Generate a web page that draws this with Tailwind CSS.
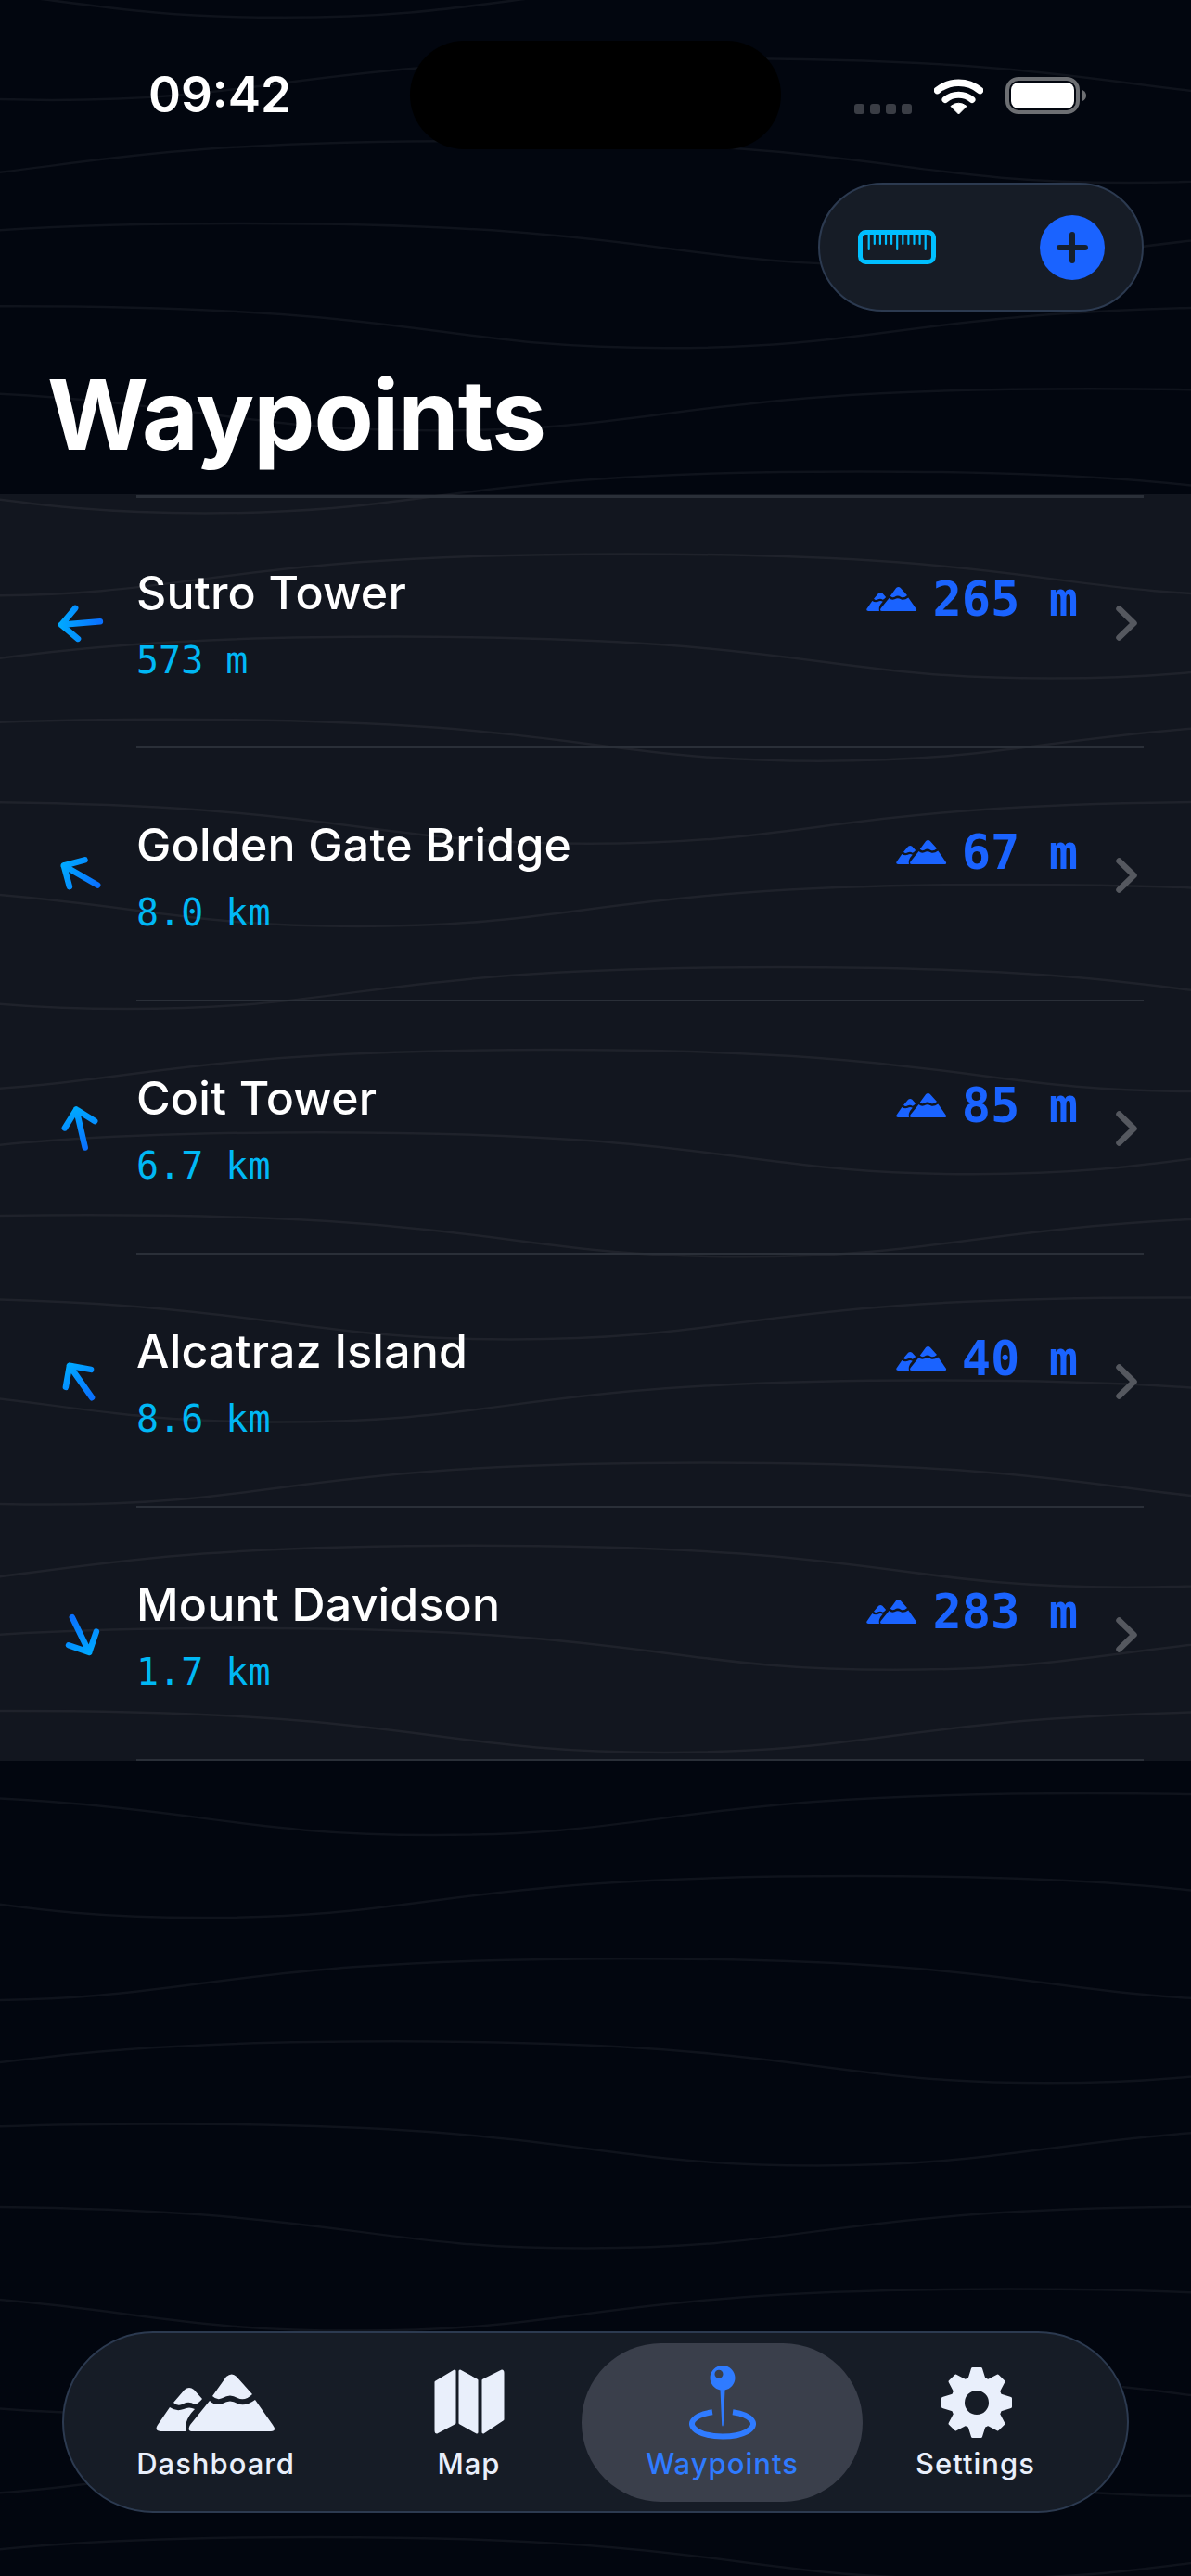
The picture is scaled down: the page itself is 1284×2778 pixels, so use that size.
<!DOCTYPE html>
<html lang="en">
<head>
<meta charset="utf-8">
<script src="https://cdn.jsdelivr.net/npm/@tailwindcss/browser@4"></script>
<title>Waypoints</title>
</head>
<body class="bg-[#02060f]">
<svg class="absolute w-0 h-0" aria-hidden="true">
  <defs>
    <path id="wave" d="M0 22.5C257 22.5 448 -22.5 705 -22.5S1153 22.5 1410 22.5S1667 -22.5 2115 -22.5 S2563 22.5 2820 22.5S3077 -22.5 3525 -22.5S3973 22.5 4230 22.5S4487 -22.5 4935 -22.5S5383 22.5 5640 22.5" fill="none" stroke="#0f131c" stroke-width="2.5"/>
    <linearGradient id="arrowGrad" gradientUnits="userSpaceOnUse" x1="0" y1="-22" x2="0" y2="22">
      <stop offset="0" stop-color="#00a8ff"/><stop offset="1" stop-color="#0a70ff"/>
    </linearGradient>
    <symbol id="arrow" viewBox="-25 -25 50 50">
      <path d="M0 21V-21M-16.6 -4.4L0 -21L16.6 -4.4" fill="none" stroke="url(#arrowGrad)" stroke-width="6.5" stroke-linecap="round" stroke-linejoin="round"/>
    </symbol>
    <symbol id="mountains" viewBox="0 0 130 65">
      <g fill="currentColor">
        <path d="M58 30Q64 36 72 33Q80 28 88 33Q96 37 107 29L126 56Q131 63 124 63L40 63Q33 63 37 56Z"/>
        <path d="M61 25L76 4Q82 -1 87 4L104 23Q96 31 88 27Q80 22 72 27Q66 30 61 25Z"/>
        <path d="M15 37Q22 42 30 39Q36 36 42 39Q35 46 33 53Q32 58 33 63L5 63Q-2 62 2 56Z"/>
        <path d="M19 32L31 18Q36 14 41 18L50 28Q46 33 42 34Q36 30 30 33Q24 37 19 32Z"/>
      </g>
    </symbol>
    <symbol id="chev" viewBox="0 0 23 38">
      <path d="M3.5 3.5L19.5 19L3.5 34.5" fill="none" stroke="#55585f" stroke-width="6.5" stroke-linecap="round" stroke-linejoin="round"/>
    </symbol>
  </defs>
</svg>

<div class="relative w-[1284px] h-[2778px] overflow-hidden bg-[#02060f] text-white [font-family:Inter,sans-serif]">
  <!-- contour lines -->
  <svg class="absolute inset-0" width="1284" height="2778" viewBox="0 0 1284 2778" aria-hidden="true">
    <use href="#wave" x="-2515" y="-3.7"/><use href="#wave" x="-2764" y="85.4"/><use href="#wave" x="-1603" y="174.5"/><use href="#wave" x="-1852" y="263.6"/>
    <use href="#wave" x="-2101" y="352.7"/><use href="#wave" x="-2350" y="441.8"/><use href="#wave" x="-2599" y="530.9"/><use href="#wave" x="-1438" y="620"/>
    <use href="#wave" x="-1687" y="709.1"/><use href="#wave" x="-1936" y="798.2"/><use href="#wave" x="-2185" y="887.3"/><use href="#wave" x="-2434" y="976.4"/>
    <use href="#wave" x="-2683" y="1065.5"/><use href="#wave" x="-1522" y="1154.6"/><use href="#wave" x="-1771" y="1243.7"/><use href="#wave" x="-2020" y="1332.8"/>
    <use href="#wave" x="-2269" y="1421.9"/><use href="#wave" x="-2518" y="1511"/><use href="#wave" x="-2767" y="1600.1"/><use href="#wave" x="-1606" y="1689.2"/>
    <use href="#wave" x="-1855" y="1778.3"/><use href="#wave" x="-2104" y="1867.4"/><use href="#wave" x="-2353" y="1956.5"/><use href="#wave" x="-2602" y="2045.6"/>
    <use href="#wave" x="-1441" y="2134.7"/><use href="#wave" x="-1690" y="2223.8"/><use href="#wave" x="-1939" y="2312.9"/><use href="#wave" x="-2188" y="2402"/>
    <use href="#wave" x="-2437" y="2491.1"/><use href="#wave" x="-2686" y="2580.2"/><use href="#wave" x="-1525" y="2669.3"/><use href="#wave" x="-1774" y="2758.4"/>
  </svg>

  <div class="relative flex flex-col h-full">
    <!-- status bar -->
    <div class="mt-[44px] h-[117px] grid grid-cols-[442px_400px_442px] shrink-0">
      <div class="flex items-start pl-[160px] pt-[30px]">
        <span class="text-[53px] leading-[56px] font-semibold">09:42</span>
      </div>
      <div class="bg-black rounded-full"></div>
      <div class="flex items-start pl-[79px] pt-[39px]">
        <div class="flex gap-[6px] mt-[29px]">
          <span class="w-[11px] h-[11px] rounded-[3px] bg-[#3a3d45]"></span>
          <span class="w-[11px] h-[11px] rounded-[3px] bg-[#3a3d45]"></span>
          <span class="w-[11px] h-[11px] rounded-[3px] bg-[#3a3d45]"></span>
          <span class="w-[11px] h-[11px] rounded-[3px] bg-[#3a3d45]"></span>
        </div>
        <svg class="ml-[24px] mt-[1px]" width="53" height="39" viewBox="0 0 53 39">
          <path d="M3.5 13.5A36 36 0 0 1 49.5 13.5" fill="none" stroke="#fff" stroke-width="7.5" stroke-linecap="round"/>
          <path d="M12 23.5A22.5 22.5 0 0 1 41 23.5" fill="none" stroke="#fff" stroke-width="7" stroke-linecap="round"/>
          <path d="M26.5 39L18 30.5Q26.5 24 35 30.5Z" fill="#fff" stroke="#fff" stroke-linejoin="round"/>
        </svg>
        <svg class="ml-[24px]" width="88" height="40" viewBox="0 0 88 40">
          <rect x="2" y="2" width="76" height="36" rx="12" fill="none" stroke="#6d6f73" stroke-width="4"/>
          <rect x="6" y="6" width="68" height="28" rx="8" fill="#fff"/>
          <path d="M83 14Q87 16 87 20Q87 24 83 26Z" fill="#6d6f73"/>
        </svg>
      </div>
    </div>

    <!-- toolbar pill -->
    <div class="flex justify-end pr-[51px] mt-[36px] shrink-0">
      <div class="w-[351px] h-[139px] rounded-full bg-[#161c26] border-2 border-[#2c3a50] flex items-center justify-between pl-[41px] pr-[40px]">
        <svg width="84" height="37" viewBox="0 0 84 37" class="text-[#00bfff]">
          <rect x="2.5" y="2.5" width="79" height="32" rx="6" fill="none" stroke="currentColor" stroke-width="5"/>
          <path d="M11.7 4V21M17.8 4V15M23.9 4V15M30 4V15M36.1 4V15M42.2 4V21M48.3 4V15M54.4 4V15M60.5 4V15M66.6 4V15M72.7 4V21" stroke="currentColor" stroke-width="2.2" stroke-linecap="round" fill="none"/>
        </svg>
        <span class="w-[70px] h-[70px] rounded-full bg-[#1a63ff] flex items-center justify-center">
          <svg width="34" height="34" viewBox="0 0 34 34"><path d="M17 3V31M3 17H31" stroke="#15202e" stroke-width="6" stroke-linecap="round"/></svg>
        </span>
      </div>
    </div>

    <!-- title -->
    <h1 class="mt-[50px] pl-[51px] h-[147px] text-[105px] leading-[122px] font-bold tracking-[-1px] shrink-0">Waypoints</h1>

    <!-- list -->
    <div class="bg-white/[0.065] shrink-0">
      <div class="ml-[147px] mr-[51px] h-[3px] mt-[1px] bg-[#2a2f38]"></div>

      <!-- row -->
      <div class="h-[270px] flex items-center border-b-0 relative">
        <div class="w-[147px] pl-[62px] shrink-0 flex"><svg width="50" height="50" class="rotate-[265deg]"><use href="#arrow"/></svg></div>
        <div class="flex-1 flex flex-col pt-[1px]">
          <span class="text-[50px] leading-[58px] font-medium tracking-[0.2px]">Sutro Tower</span>
          <span class="text-[40px] leading-[46px] mt-[21px] text-[#00b8f5] [font-family:'DejaVu_Sans_Mono',monospace]">573 m</span>
        </div>
        <div class="flex items-center gap-[16px] text-[#1a63ff] self-start mt-[80px]">
          <svg width="55" height="28"><use href="#mountains"/></svg>
          <span class="text-[52px] leading-[58px] font-bold [font-family:'DejaVu_Sans_Mono',monospace]">265 m</span>
        </div>
        <svg class="ml-[41px] mr-[58px] mt-[0px]" width="23" height="38"><use href="#chev"/></svg>
        <div class="absolute left-[147px] right-[51px] bottom-0 h-[2px] bg-[#2a2f38]"></div>
      </div>

      <div class="h-[273px] flex items-center relative">
        <div class="w-[147px] pl-[62px] shrink-0 flex"><svg width="50" height="50" class="rotate-[300deg]"><use href="#arrow"/></svg></div>
        <div class="flex-1 flex flex-col pt-[1px]">
          <span class="text-[50px] leading-[58px] font-medium tracking-[0.2px]">Golden Gate Bridge</span>
          <span class="text-[40px] leading-[46px] mt-[21px] text-[#00b8f5] [font-family:'DejaVu_Sans_Mono',monospace]">8.0 km</span>
        </div>
        <div class="flex items-center gap-[16px] text-[#1a63ff] self-start mt-[83px]">
          <svg width="55" height="28"><use href="#mountains"/></svg>
          <span class="text-[52px] leading-[58px] font-bold [font-family:'DejaVu_Sans_Mono',monospace]">67 m</span>
        </div>
        <svg class="ml-[41px] mr-[58px]" width="23" height="38"><use href="#chev"/></svg>
        <div class="absolute left-[147px] right-[51px] bottom-0 h-[2px] bg-[#2a2f38]"></div>
      </div>

      <div class="h-[273px] flex items-center relative">
        <div class="w-[147px] pl-[62px] shrink-0 flex"><svg width="50" height="50" class="rotate-[347deg]"><use href="#arrow"/></svg></div>
        <div class="flex-1 flex flex-col pt-[1px]">
          <span class="text-[50px] leading-[58px] font-medium tracking-[0.2px]">Coit Tower</span>
          <span class="text-[40px] leading-[46px] mt-[21px] text-[#00b8f5] [font-family:'DejaVu_Sans_Mono',monospace]">6.7 km</span>
        </div>
        <div class="flex items-center gap-[16px] text-[#1a63ff] self-start mt-[83px]">
          <svg width="55" height="28"><use href="#mountains"/></svg>
          <span class="text-[52px] leading-[58px] font-bold [font-family:'DejaVu_Sans_Mono',monospace]">85 m</span>
        </div>
        <svg class="ml-[41px] mr-[58px]" width="23" height="38"><use href="#chev"/></svg>
        <div class="absolute left-[147px] right-[51px] bottom-0 h-[2px] bg-[#2a2f38]"></div>
      </div>

      <div class="h-[273px] flex items-center relative">
        <div class="w-[147px] pl-[62px] shrink-0 flex"><svg width="50" height="50" class="rotate-[325deg]"><use href="#arrow"/></svg></div>
        <div class="flex-1 flex flex-col pt-[1px]">
          <span class="text-[50px] leading-[58px] font-medium tracking-[0.2px]">Alcatraz Island</span>
          <span class="text-[40px] leading-[46px] mt-[21px] text-[#00b8f5] [font-family:'DejaVu_Sans_Mono',monospace]">8.6 km</span>
        </div>
        <div class="flex items-center gap-[16px] text-[#1a63ff] self-start mt-[83px]">
          <svg width="55" height="28"><use href="#mountains"/></svg>
          <span class="text-[52px] leading-[58px] font-bold [font-family:'DejaVu_Sans_Mono',monospace]">40 m</span>
        </div>
        <svg class="ml-[41px] mr-[58px]" width="23" height="38"><use href="#chev"/></svg>
        <div class="absolute left-[147px] right-[51px] bottom-0 h-[2px] bg-[#2a2f38]"></div>
      </div>

      <div class="h-[273px] flex items-center relative">
        <div class="w-[147px] pl-[62px] shrink-0 flex"><svg width="50" height="50" class="rotate-[154deg]"><use href="#arrow"/></svg></div>
        <div class="flex-1 flex flex-col pt-[1px]">
          <span class="text-[50px] leading-[58px] font-medium tracking-[0.2px]">Mount Davidson</span>
          <span class="text-[40px] leading-[46px] mt-[21px] text-[#00b8f5] [font-family:'DejaVu_Sans_Mono',monospace]">1.7 km</span>
        </div>
        <div class="flex items-center gap-[16px] text-[#1a63ff] self-start mt-[83px]">
          <svg width="55" height="28"><use href="#mountains"/></svg>
          <span class="text-[52px] leading-[58px] font-bold [font-family:'DejaVu_Sans_Mono',monospace]">283 m</span>
        </div>
        <svg class="ml-[41px] mr-[58px]" width="23" height="38"><use href="#chev"/></svg>
        <div class="absolute left-[147px] right-[51px] bottom-0 h-[2px] bg-[#2a2f38]"></div>
      </div>
    </div>

    <!-- tab bar -->
    <div class="mt-auto mb-[68px] mx-[67px] h-[196px] rounded-full bg-[#161c26] border-2 border-[#2c3a50] grid grid-cols-4 px-[27px] shrink-0 text-[#e9effb]">
      <div class="flex flex-col items-center pt-[43px]">
        <svg width="130" height="65" class="mb-[15px]"><use href="#mountains"/></svg>
        <span class="text-[31px] leading-[36px] font-medium tracking-[1px]">Dashboard</span>
      </div>
      <div class="flex flex-col items-center pt-[38px]">
        <svg width="76" height="71" viewBox="0 0 76 71" class="mb-[14px]">
          <g fill="currentColor" stroke="currentColor" stroke-width="3" stroke-linejoin="round">
            <path d="M2 15L22 3V59L3 69Q2 69 2 67Z"/>
            <path d="M28 3L46 13V69L28 59Z"/>
            <path d="M53 13L73 3Q74 3 74 5V55L53 69Z"/>
          </g>
        </svg>
        <span class="text-[31px] leading-[36px] font-medium tracking-[1px]">Map</span>
      </div>
      <div class="relative flex flex-col items-center pt-[35px] text-[#2f7bff]">
        <div class="absolute -inset-x-[15px] top-[11px] h-[171px] rounded-full bg-[#3a3f4b]"></div>
        <svg width="72" height="80" viewBox="0 0 72 80" class="relative mb-[8px]">
          <path fill-rule="evenodd" fill="currentColor" d="M36 0C43.5 0 49.5 6 49.5 13.3C49.5 20 44.5 25.5 38.5 26.5L36.8 64Q36 67 35.2 64L33.5 26.5C27.5 25.5 22.5 20 22.5 13.3C22.5 6 28.5 0 36 0ZM32 4.8A4.5 4.5 0 1 0 32 13.8A4.5 4.5 0 1 0 32 4.8Z"/>
          <path d="M25 50.3A33 13.5 0 1 0 47 50.3" fill="none" stroke="currentColor" stroke-width="6" stroke-linecap="butt"/>
        </svg>
        <span class="relative text-[31px] leading-[36px] font-medium tracking-[1px]">Waypoints</span>
      </div>
      <div class="flex flex-col items-center pt-[36px]">
        <svg width="78" height="78" viewBox="0 0 78 78" class="mb-[9px] ml-[3px]">
          <circle cx="39" cy="39" r="20.5" fill="none" stroke="currentColor" stroke-width="15"/>
          <g fill="currentColor" stroke="currentColor" stroke-width="3" stroke-linejoin="round">
            <path d="M30 17L34.5 2.5H43.5L48 17Z"/>
            <path d="M30 17L34.5 2.5H43.5L48 17Z" transform="rotate(45 39 39)"/>
            <path d="M30 17L34.5 2.5H43.5L48 17Z" transform="rotate(90 39 39)"/>
            <path d="M30 17L34.5 2.5H43.5L48 17Z" transform="rotate(135 39 39)"/>
            <path d="M30 17L34.5 2.5H43.5L48 17Z" transform="rotate(180 39 39)"/>
            <path d="M30 17L34.5 2.5H43.5L48 17Z" transform="rotate(225 39 39)"/>
            <path d="M30 17L34.5 2.5H43.5L48 17Z" transform="rotate(270 39 39)"/>
            <path d="M30 17L34.5 2.5H43.5L48 17Z" transform="rotate(315 39 39)"/>
          </g>
        </svg>
        <span class="text-[31px] leading-[36px] font-medium tracking-[1px]">Settings</span>
      </div>
    </div>
  </div>
</div>
</body>
</html>
